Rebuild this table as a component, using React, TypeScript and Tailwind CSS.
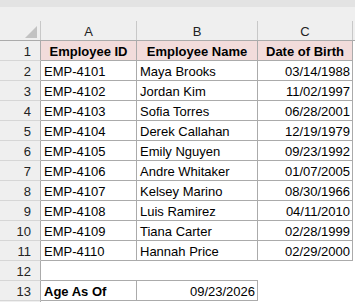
const employees = [
  ['EMP-4101', 'Maya Brooks', '03/14/1988'],
  ['EMP-4102', 'Jordan Kim', '11/02/1997'],
  ['EMP-4103', 'Sofia Torres', '06/28/2001'],
  ['EMP-4104', 'Derek Callahan', '12/19/1979'],
  ['EMP-4105', 'Emily Nguyen', '09/23/1992'],
  ['EMP-4106', 'Andre Whitaker', '01/07/2005'],
  ['EMP-4107', 'Kelsey Marino', '08/30/1966'],
  ['EMP-4108', 'Luis Ramirez', '04/11/2010'],
  ['EMP-4109', 'Tiana Carter', '02/28/1999'],
  ['EMP-4110', 'Hannah Price', '02/29/2000'],
]

function RowNum({ n }: { n: number }) {
  return (
    <div className="w-[41px] shrink-0 bg-[#efefef] border-r border-b border-r-[#ababab] border-b-[#d6d6d6] flex items-center justify-end pr-[9px] pt-[1px] text-[#222]">
      {n}
    </div>
  )
}

export default function App() {
  return (
    <div className="w-[355px] h-[302px] overflow-hidden bg-white font-['Liberation_Sans',Arial,sans-serif] text-[13px] leading-[19px] text-black">
      <div className="h-[7px] bg-[#e3e3e3]" />
      <div className="h-[14px] bg-[#efefef]" />

      {/* column letters */}
      <div className="flex h-[20px] bg-[#efefef] border-b border-[#ababab] text-[#222]">
        <div className="w-[41px] shrink-0 border-r border-[#c8c8c8] flex items-end justify-end pr-[3px] pb-[2px]">
          <svg width="12" height="12" viewBox="0 0 12 12">
            <polygon points="12,0 12,12 0,12" fill="#c2c2c2" />
          </svg>
        </div>
        <div className="w-[96px] shrink-0 border-r border-[#c8c8c8] flex items-center justify-center pt-[1px]">A</div>
        <div className="w-[121px] shrink-0 border-r border-[#c8c8c8] flex items-center justify-center pt-[1px]">B</div>
        <div className="w-[95px] shrink-0 border-r border-[#c8c8c8] flex items-center justify-center pt-[1px]">C</div>
      </div>

      {/* header row */}
      <div className="flex h-[20px]">
        <RowNum n={1} />
        <div className="w-[96px] shrink-0 bg-[#f2dcdb] border-r border-b border-[#ababab] flex items-center justify-center pt-[1px] font-bold">
          Employee ID
        </div>
        <div className="w-[121px] shrink-0 bg-[#f2dcdb] border-r border-b border-[#ababab] flex items-center justify-center pt-[1px] font-bold">
          Employee Name
        </div>
        <div className="w-[95px] shrink-0 bg-[#f2dcdb] border-r border-b border-[#ababab] flex items-center justify-center pt-[1px] font-bold">
          Date of Birth
        </div>
      </div>

      {employees.map(([id, name, dob], i) => (
        <div key={id} className="flex h-[20px]">
          <RowNum n={i + 2} />
          <div className="w-[96px] shrink-0 border-r border-b border-[#ababab] flex items-center pl-[3px] pt-[1px]">{id}</div>
          <div className="w-[121px] shrink-0 border-r border-b border-[#ababab] flex items-center pl-[3px] pt-[1px]">{name}</div>
          <div className="w-[95px] shrink-0 border-r border-b border-[#ababab] flex items-center justify-end pr-[2px] pt-[1px]">{dob}</div>
        </div>
      ))}

      {/* row 12 */}
      <div className="flex h-[20px]">
        <RowNum n={12} />
        <div className="w-[96px] shrink-0 border-b border-[#ababab]" />
        <div className="w-[121px] shrink-0 border-b border-[#ababab]" />
      </div>

      {/* row 13 */}
      <div className="flex h-[20px]">
        <RowNum n={13} />
        <div className="w-[96px] shrink-0 border-r border-b border-[#ababab] flex items-center pl-[3px] pt-[1px] font-bold">Age As Of</div>
        <div className="w-[121px] shrink-0 border-r border-b border-[#ababab] flex items-center justify-end pr-[2px] pt-[1px]">09/23/2026</div>
      </div>

      <div className="flex h-[20px]">
        <div className="w-[41px] shrink-0 bg-[#efefef] border-r border-[#ababab]" />
      </div>
    </div>
  )
}
